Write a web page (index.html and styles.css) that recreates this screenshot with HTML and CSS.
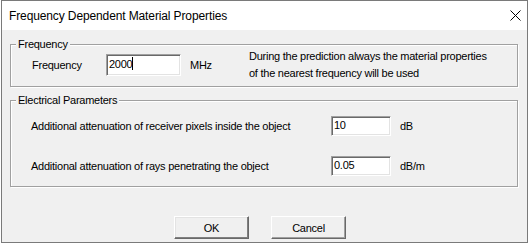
FILE: index.html
```html
<!DOCTYPE html>
<html>
<head>
  <meta charset="UTF-8">
  <title>Frequency Dependent Material Properties</title>
  <link rel="stylesheet" href="styles.css">
</head>
<body>
  <div class="window">
    <div class="titlebar">
      <span class="title">Frequency Dependent Material Properties</span>
      <svg class="close" width="11" height="11" viewBox="0 0 11 11">
        <path d="M0.5 0.5 L10.5 10.5 M10.5 0.5 L0.5 10.5" stroke="#000" stroke-width="1" fill="none"/>
      </svg>
    </div>

    <div class="client">
      <fieldset class="group freq">
        <legend>Frequency</legend>
        <div class="freq-row">
          <label>Frequency</label>
          <div class="edit">2000<span class="caret"></span></div>
          <span class="unit">MHz</span>
          <div class="note">
            <div>During the prediction always the material properties</div>
            <div>of the nearest frequency will be used</div>
          </div>
        </div>
      </fieldset>

      <fieldset class="group elec">
        <legend>Electrical Parameters</legend>
        <div class="elec-rows">
          <label>Additional attenuation of receiver pixels inside the object</label>
          <div class="edit small">10</div>
          <span class="unit">dB</span>

          <label>Additional attenuation of rays penetrating the object</label>
          <div class="edit small">0.05</div>
          <span class="unit">dB/m</span>
        </div>
      </fieldset>

      <div class="buttons">
        <button class="btn default">OK</button>
        <button class="btn">Cancel</button>
      </div>
    </div>
  </div>
</body>
</html>
```

FILE: styles.css
```css
body {
  margin: 0;
  padding-left: 1px;
  background: #fff;
  font-family: "Liberation Sans", Arial, sans-serif;
  font-size: 11px;
  letter-spacing: -0.25px;
  color: #000;
}
.window {
  width: 525px;
  border: 1px solid #7a7a7a;
  background: #f0f0f0;
}
.titlebar {
  height: 29px;
  background: #fff;
  display: flex;
  align-items: center;
  justify-content: space-between;
  padding: 0 6px 0 7px;
}
.title {
  font-family: "Liberation Sans", Arial, sans-serif;
  font-size: 12px;
  letter-spacing: -0.12px;
  color: #000;
}
.close {
  display: block;
}
.client {
  padding: 7px 9px 3px 8px;
}

/* group boxes */
.group {
  margin: 0;
  min-width: 0;
  border: 1px solid #a0a0a0;
  box-shadow: inset 1px 1px 0 #fff, 1px 1px 0 #fff;
}
.group legend {
  padding: 0 2px;
  line-height: 14px;
  background: #f0f0f0;
}
.freq {
  padding: 3px 10px 10px 21px;
}
.freq legend {
  margin-left: -16px;
}
.elec {
  margin-top: 6px;
  padding: 9px 10px 10px 20px;
}
.elec legend {
  margin-left: -15px;
}

.freq-row {
  display: grid;
  grid-template-columns: 74px 75px 68px 1fr;
  grid-template-rows: 22px;
  align-items: center;
}
.freq-row .unit {
  padding-left: 9px;
}
.note {
  line-height: 17px;
}

.elec-rows {
  display: grid;
  grid-template-columns: 300px 60px 1fr;
  grid-template-rows: 20px 20px;
  row-gap: 20px;
  align-items: center;
}
.elec-rows .unit {
  padding-left: 9px;
}

/* sunken edit box */
.edit {
  box-sizing: border-box;
  height: 22px;
  line-height: 18px;
  padding: 0 2px;
  background: #fff;
  border: 1px solid;
  border-color: #a0a0a0 #fff #fff #a0a0a0;
  box-shadow: inset 1px 1px 0 #696969, inset -1px -1px 0 #e3e3e3;
  white-space: nowrap;
}
.edit.small {
  height: 20px;
  line-height: 16px;
}
.caret {
  display: inline-block;
  width: 1px;
  height: 13px;
  background: #000;
  vertical-align: -2px;
}

/* push buttons */
.buttons {
  display: flex;
  justify-content: center;
  gap: 22px;
  margin-top: 29px;
  padding-right: 8px;
}
.btn {
  box-sizing: border-box;
  width: 75px;
  height: 23px;
  padding: 0;
  font-family: "Liberation Sans", Arial, sans-serif;
  font-size: 11px;
  letter-spacing: -0.25px;
  color: #000;
  background: #f0f0f0;
  border: 1px solid;
  border-color: #fff #696969 #696969 #fff;
  box-shadow: inset -1px -1px 0 #a0a0a0;
}
.btn.default {
  box-shadow: inset -1px -1px 0 #808080, inset 1px 1px 0 #e3e3e3;
}
```
